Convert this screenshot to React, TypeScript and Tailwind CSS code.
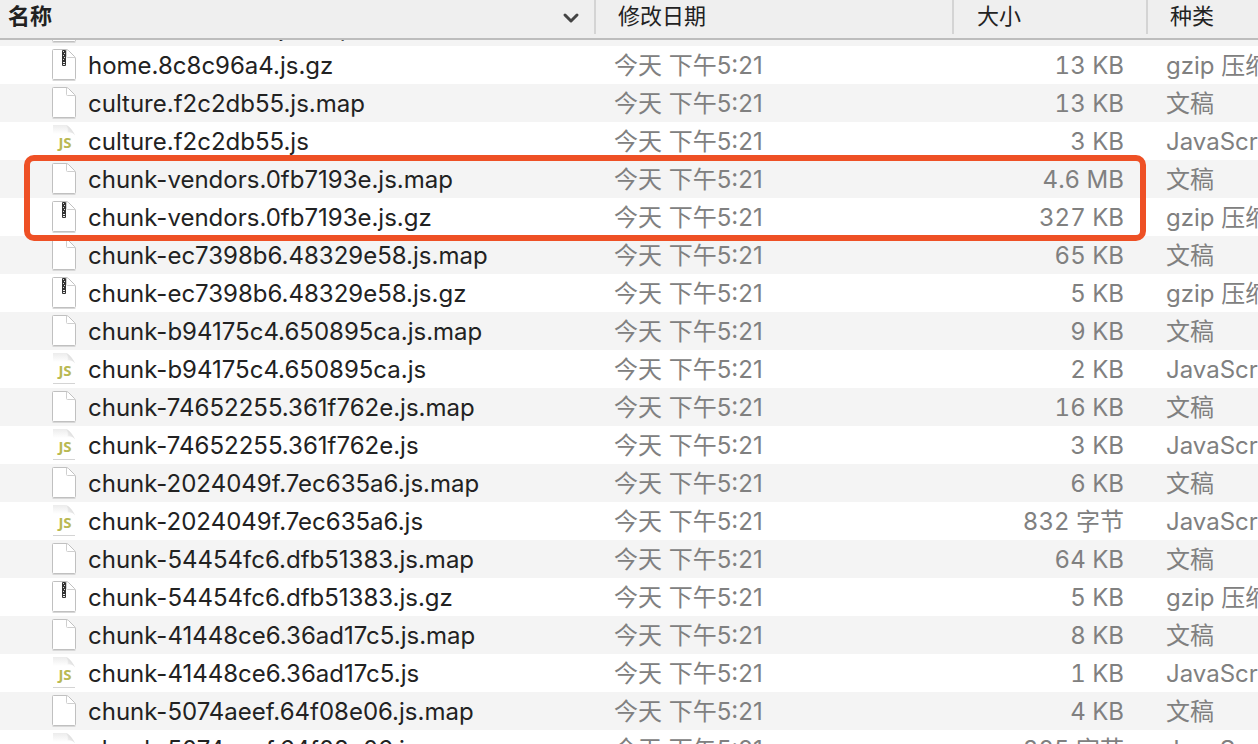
import React from "react";
import { ChevronDown } from "lucide-react";

type Kind = 'map' | 'gz' | 'js';

type FileEntry = {
  name: string;
  size: string;
  kind: Kind;
}

const kindLabels: Record<Kind, string> = {
  map: '文稿',
  gz: 'gzip 压缩归档',
  js: 'JavaScript'
}

const modified = '今天 下午5:21';

const files: FileEntry[] = [
  { name: 'home.8c8c96a4.js.map', size: '41 KB', kind: 'map' },
  { name: 'home.8c8c96a4.js.gz', size: '13 KB', kind: 'gz' },
  { name: 'culture.f2c2db55.js.map', size: '13 KB', kind: 'map' },
  { name: 'culture.f2c2db55.js', size: '3 KB', kind: 'js' },
  { name: 'chunk-vendors.0fb7193e.js.map', size: '4.6 MB', kind: 'map' },
  { name: 'chunk-vendors.0fb7193e.js.gz', size: '327 KB', kind: 'gz' },
  { name: 'chunk-ec7398b6.48329e58.js.map', size: '65 KB', kind: 'map' },
  { name: 'chunk-ec7398b6.48329e58.js.gz', size: '5 KB', kind: 'gz' },
  { name: 'chunk-b94175c4.650895ca.js.map', size: '9 KB', kind: 'map' },
  { name: 'chunk-b94175c4.650895ca.js', size: '2 KB', kind: 'js' },
  { name: 'chunk-74652255.361f762e.js.map', size: '16 KB', kind: 'map' },
  { name: 'chunk-74652255.361f762e.js', size: '3 KB', kind: 'js' },
  { name: 'chunk-2024049f.7ec635a6.js.map', size: '6 KB', kind: 'map' },
  { name: 'chunk-2024049f.7ec635a6.js', size: '832 字节', kind: 'js' },
  { name: 'chunk-54454fc6.dfb51383.js.map', size: '64 KB', kind: 'map' },
  { name: 'chunk-54454fc6.dfb51383.js.gz', size: '5 KB', kind: 'gz' },
  { name: 'chunk-41448ce6.36ad17c5.js.map', size: '8 KB', kind: 'map' },
  { name: 'chunk-41448ce6.36ad17c5.js', size: '1 KB', kind: 'js' },
  { name: 'chunk-5074aeef.64f08e06.js.map', size: '4 KB', kind: 'map' },
  { name: 'chunk-5074aeef.64f08e06.js', size: '825 字节', kind: 'js' }
]

function FileIcon( { kind }: { kind: Kind } ) {

  if ( kind === 'js' ) return (

    <svg className="shrink-0" width="26" height="34" viewBox="0 1 26 34" aria-hidden="true">

      <defs>
        <linearGradient id="fold" x1="0" y1="1" x2="1" y2="0">
          <stop offset="0" stopColor="#fff" />
          <stop offset="1" stopColor="#c8c8c8" />
        </linearGradient>
        <linearGradient id="sheet" x1="0" y1="0" x2="0" y2="1">
          <stop offset="0" stopColor="#ececec" />
          <stop offset="0.3" stopColor="#fff" />
        </linearGradient>
      </defs>

      <path d="M2 2H14.500C17 2 24 9.500 24 13V32H2Z" fill="url(#sheet)" />
      <path d="M15 2C17 4 17 7 16.500 9.500C19 9 22 9.500 24 12.500C23 9 18 3 15 2Z" fill="url(#fold)" />
      <path d="M2 32.500H24" stroke="#d4d4d4" />
      <text x="14" y="25" textAnchor="middle" fontFamily="Open Sans, sans-serif" fontSize="15" fontWeight="700" fill="#b9b952">JS</text>

    </svg>

  )

  return (

    <svg className="shrink-0" width="26" height="34" viewBox="0 1 26 34" aria-hidden="true">

      <path d="M2 33.500H24" stroke="#d8d8d8" strokeLinecap="round" />
      <path d="M2.500 2.500H15Q16.500 2.500 17.500 3.500L23.500 9.500Q24.500 10.500 24.500 12V31.500Q24.500 32.500 23.500 32.500H2.500Q1.500 32.500 1.500 31.500V3.500Q1.500 2.500 2.500 2.500Z" fill="#fff" stroke="#c0c0c0" />
      <path d="M15.500 3V9.500Q15.500 10.500 16.500 10.500H24" fill="none" stroke="#cfcfcf" />

      {

        kind === 'gz' && (

          <g>
            <rect x="11" y="3" width="4" height="16" rx="1" fill="#333" />
            <path d="M12 4.500H13M13 6.500H14M12 8.500H13M13 10.500H14M12 12.500H13" stroke="#ddd" />
            <path d="M12 15.500H14M12 17.500H14" stroke="#eee" />
          </g>

        )

      }

    </svg>

  )

}

export default function App() {

  return (

    <div className="relative h-screen overflow-hidden bg-white font-['Inter','Noto_Sans_CJK_SC',sans-serif]">

      {/* The list is scrolled a little, the first row is partly under the header */}
      <table className="-mt-8 w-full table-fixed border-separate border-spacing-0 whitespace-nowrap">

        <colgroup>
          <col />
          <col className="w-[358px]" />
          <col className="w-[194px]" />
          <col className="w-[110px]" />
        </colgroup>

        <thead className="sticky top-0 z-10 text-left text-[22px] leading-8 text-[#222]">

          <tr className="h-10">

            <th className="border-b-2 border-[#bdbdbd] bg-[#efefef] p-0 align-top font-bold">
              <div className="flex h-[34px] items-start justify-between border-r-2 border-[#d4d4d4] pr-[11px] pl-2">
                <span>名称</span>
                <ChevronDown className="mt-1.5 size-6 text-[#444]" strokeWidth={3} />
              </div>
            </th>

            <th className="border-b-2 border-[#bdbdbd] bg-[#efefef] p-0 align-top font-normal">
              <div className="h-[34px] border-r-2 border-[#d4d4d4] pl-[22px]">修改日期</div>
            </th>

            <th className="border-b-2 border-[#bdbdbd] bg-[#efefef] p-0 align-top font-normal">
              <div className="h-[34px] border-r-2 border-[#d4d4d4] pl-[23px]">大小</div>
            </th>

            <th className="border-b-2 border-[#bdbdbd] bg-[#efefef] p-0 align-top font-normal">
              <div className="h-[34px] pl-[22px]">种类</div>
            </th>

          </tr>

        </thead>

        <tbody className="text-2xl leading-9 text-[#808080]">

          {

            files.map( ( { name, size, kind } ) => (

              <tr key={name} className="h-[38px] odd:bg-[#f4f4f4]">

                <td className="p-0">
                  <div className="flex h-[38px] items-center gap-[11px] pl-[51px] text-[#222]">
                    <FileIcon kind={kind} />
                    <span className="pt-0.5">{ name }</span>
                  </div>
                </td>

                <td className="p-0 pt-0.5 pl-[18px]">{ modified }</td>

                <td className="p-0 pt-0.5 pr-6 text-right tabular-nums">{ size }</td>

                <td className="overflow-hidden p-0 pt-0.5 pl-[18px]">{ kindLabels[ kind ] }</td>

              </tr>

            ) )

          }

        </tbody>

      </table>

      {/* Marker around the vendor chunks */}
      <div className="pointer-events-none absolute top-[155px] right-28 left-6 z-20 h-[86px] rounded-[10px] border-6 border-[#ee5025]"></div>

    </div>

  )

}
